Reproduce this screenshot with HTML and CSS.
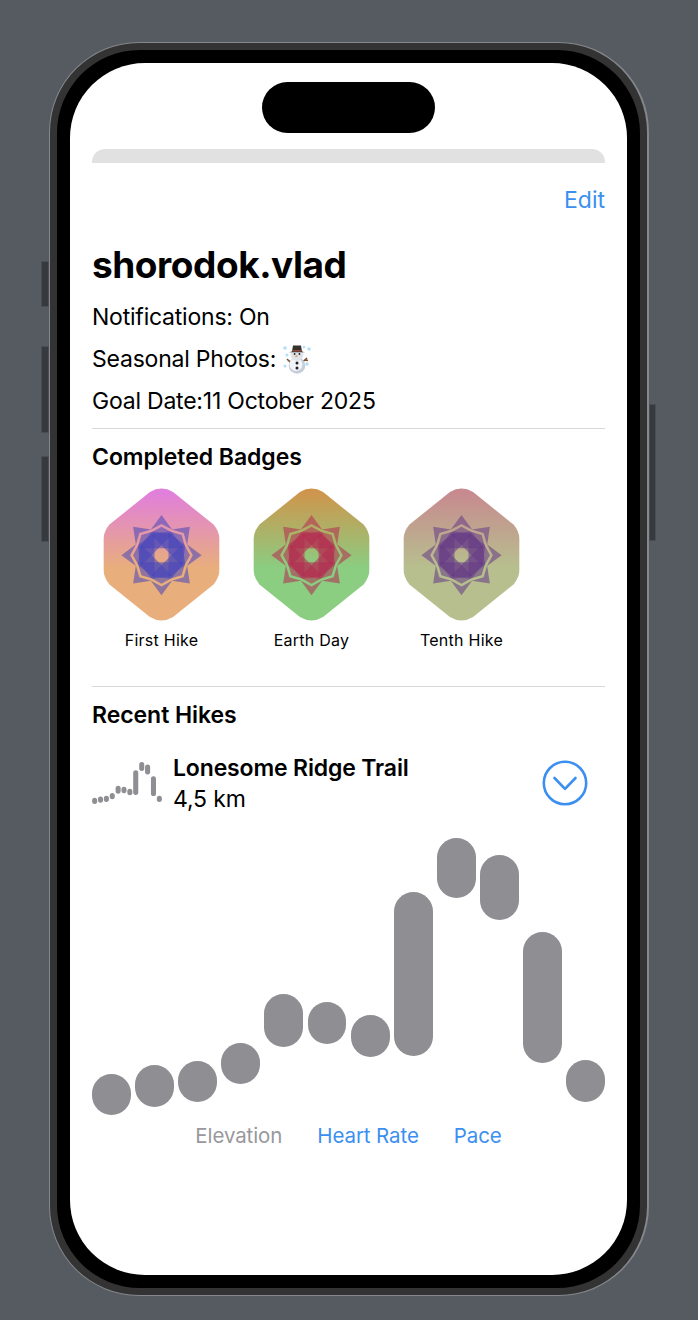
FILE: index.html
```html
<!DOCTYPE html>
<html lang="en">
<head>
    <meta charset="UTF-8">
    <meta name="viewport" content="width=device-width, initial-scale=1.0">
    <title>Profile</title>
    <link rel="stylesheet" href="styles.css">
</head>
<body>
    <div class="phone">
        <span class="side-btn mute"></span>
        <span class="side-btn vol-up"></span>
        <span class="side-btn vol-down"></span>
        <span class="side-btn power"></span>
        <div class="bezel">
            <div class="screen">
                <div class="island"></div>
                <div class="sheet-edge"></div>
                <div class="content">
                    <div class="edit">Edit</div>
                    <h1>shorodok.vlad</h1>
                    <div class="info">Notifications: On</div>
                    <div class="info">Seasonal Photos:
                        <svg class="snowman" viewBox="0 0 30 30">
                            <g fill="#b5def7">
                                <circle cx="3" cy="4" r="1.8"/><circle cx="27" cy="5" r="1.8"/>
                                <circle cx="5" cy="11" r="1.6"/><circle cx="25" cy="20" r="1.8"/>
                                <circle cx="3" cy="22" r="1.6"/><circle cx="22" cy="3" r="1.3"/>
                            </g>
                            <path d="M7 17 L10 18.5 M20 18.5 L25 14 M23 16 L26 16.5 M9 19 L5 15" stroke="#7a5135" stroke-width="1.6" fill="none"/>
                            <circle cx="15" cy="21.5" r="8.3" fill="#c6ced9"/>
                            <circle cx="14" cy="20.5" r="6.5" fill="#f2f5f9"/>
                            <circle cx="15" cy="10.5" r="6.4" fill="#dfe4eb"/>
                            <path d="M10 7.5 L11 1.5 H19 L20 7.5 L23 8.3 H7 Z" fill="#38322f"/>
                            <path d="M10.5 6 H19.5 V7.6 H10.5 Z" fill="#8c4a3a"/>
                            <path d="M15 11 L12.5 13 L15.6 12.6 Z" fill="#e8803a"/>
                            <circle cx="12.6" cy="10" r=".9" fill="#222"/><circle cx="17.4" cy="10" r=".9" fill="#222"/>
                            <circle cx="15" cy="19" r="1.5" fill="#222"/><circle cx="15" cy="24" r="1.5" fill="#222"/>
                        </svg>
                    </div>
                    <div class="info">Goal Date:11 October 2025</div>

                    <hr class="divider first">
                    <h2 class="section-title">Completed Badges</h2>
                    <div class="badges">
                        <div class="badge">
                            <svg class="badge-art sym-blue" viewBox="0 0 100 100">
                                <defs>
                                    <path id="hex" d="M87.44 28.5 L58.32 5 Q50 0 41.68 5 L12.56 28.5 Q8.4 33.5 8.4 38.5 L8.4 61.5 Q8.4 66.5 12.56 71.5 L41.68 95 Q50 100 58.32 95 L87.44 71.5 Q91.6 66.5 91.6 61.5 L91.6 38.5 Q91.6 33.5 87.44 28.5 Z"/>
                                    <path id="petal" opacity=".55" d="M0 -83.6 L-22.6 -53 L0 -65.3 L22.6 -53 Z M0 -59.3 L-22.6 -47 L-47 -14.6 L47 -14.6 L22.6 -47 Z"/>
                                    <g id="burst" transform="translate(50 50.5) scale(.345)">
                                        <use href="#petal"/>
                                        <use href="#petal" transform="rotate(45)"/>
                                        <use href="#petal" transform="rotate(90)"/>
                                        <use href="#petal" transform="rotate(135)"/>
                                        <use href="#petal" transform="rotate(180)"/>
                                        <use href="#petal" transform="rotate(225)"/>
                                        <use href="#petal" transform="rotate(270)"/>
                                        <use href="#petal" transform="rotate(315)"/>
                                    </g>
                                    <linearGradient id="grad-first" x1="0" y1="0" x2="0" y2="1">
                                        <stop offset=".03" stop-color="#e17fdc"/>
                                        <stop offset=".6" stop-color="#e8ae7c"/>
                                    </linearGradient>
                                    <linearGradient id="grad-earth" x1="0" y1="0" x2="0" y2="1">
                                        <stop offset=".03" stop-color="#cf954d"/>
                                        <stop offset=".6" stop-color="#8bcd81"/>
                                    </linearGradient>
                                    <linearGradient id="grad-tenth" x1="0" y1="0" x2="0" y2="1">
                                        <stop offset=".03" stop-color="#c78a8f"/>
                                        <stop offset=".6" stop-color="#b7bf8e"/>
                                    </linearGradient>
                                </defs>
                                <use href="#hex" fill="url(#grad-first)"/>
                                <use href="#burst"/>
                            </svg>
                            <div class="badge-label">First Hike</div>
                        </div>
                        <div class="badge">
                            <svg class="badge-art sym-red" viewBox="0 0 100 100">
                                <use href="#hex" fill="url(#grad-earth)"/>
                                <use href="#burst"/>
                            </svg>
                            <div class="badge-label">Earth Day</div>
                        </div>
                        <div class="badge">
                            <svg class="badge-art sym-purple" viewBox="0 0 100 100">
                                <use href="#hex" fill="url(#grad-tenth)"/>
                                <use href="#burst"/>
                            </svg>
                            <div class="badge-label">Tenth Hike</div>
                        </div>
                    </div>

                    <hr class="divider second">
                    <h2 class="section-title recent">Recent Hikes</h2>
                    <div class="hike-row">
                        <svg class="mini-chart" viewBox="0 0 513 277" preserveAspectRatio="none">
                            <rect x="1" y="236" width="37" height="41" rx="18"/>
                            <rect x="44" y="227" width="37" height="42" rx="18"/>
                            <rect x="87" y="223" width="37" height="41" rx="18"/>
                            <rect x="130" y="205" width="37" height="41" rx="18"/>
                            <rect x="173" y="156" width="37" height="53" rx="18"/>
                            <rect x="216" y="164" width="37" height="42" rx="18"/>
                            <rect x="259" y="177" width="37" height="42" rx="18"/>
                            <rect x="302" y="54" width="37" height="164" rx="18"/>
                            <rect x="346" y="0" width="37" height="60" rx="18"/>
                            <rect x="389" y="17" width="37" height="65" rx="18"/>
                            <rect x="432" y="94" width="37" height="131" rx="18"/>
                            <rect x="475" y="222" width="37" height="42" rx="18"/>
                        </svg>
                        <div class="hike-text">
                            <div class="hike-name">Lonesome Ridge Trail</div>
                            <div class="hike-dist">4,5 km</div>
                        </div>
                        <svg class="expand" viewBox="0 0 46 46">
                            <circle cx="23" cy="23" r="21.2" fill="none" stroke="#3b8ff0" stroke-width="2.6"/>
                            <path d="M12.5 18 L23 28.8 L33.5 18" fill="none" stroke="#3b8ff0" stroke-width="2.6" stroke-linecap="round" stroke-linejoin="round"/>
                        </svg>
                    </div>

                    <div class="chart">
                        <div class="capsule" style="margin-top:236px;height:41px"></div>
                        <div class="capsule" style="margin-top:227px;height:42px"></div>
                        <div class="capsule" style="margin-top:223px;height:41px"></div>
                        <div class="capsule" style="margin-top:205px;height:41px"></div>
                        <div class="capsule" style="margin-top:156px;height:53px"></div>
                        <div class="capsule" style="margin-top:164px;height:42px"></div>
                        <div class="capsule" style="margin-top:177px;height:42px"></div>
                        <div class="capsule" style="margin-top:54px;height:164px"></div>
                        <div class="capsule" style="margin-top:0;height:60px"></div>
                        <div class="capsule" style="margin-top:17px;height:65px"></div>
                        <div class="capsule" style="margin-top:94px;height:131px"></div>
                        <div class="capsule" style="margin-top:222px;height:42px"></div>
                    </div>

                    <div class="tabs">
                        <span class="tab active">Elevation</span>
                        <span class="tab">Heart Rate</span>
                        <span class="tab">Pace</span>
                    </div>
                </div>
            </div>
        </div>
    </div>
</body>
</html>
```

FILE: styles.css
```css
* {
    box-sizing: border-box;
}
body {
    margin: 0;
    height: 1320px;
    overflow: hidden;
    background: #565b62;
    font-family: Inter, "Liberation Sans", sans-serif;
    color: #000;
}
.phone {
    position: relative;
    width: 600px;
    height: 1254px;
    margin: 42px 0 0 49px;
    padding: 7px;
    background: #333;
    border: 1px solid #84878b;
    border-right-width: 2px;
    border-radius: 90px;
}
.side-btn {
    position: absolute;
    width: 8px;
    background: #36393d;
    border: 1px solid #4a4d52;
}
.mute { left: -9px; top: 218px; height: 46px; }
.vol-up { left: -9px; top: 303px; height: 87px; }
.vol-down { left: -9px; top: 413px; height: 86px; }
.power { right: -9px; top: 361px; height: 137px; width: 7px; }
.bezel {
    height: 100%;
    padding: 13px;
    background: #000;
    border-radius: 83px;
}
.screen {
    position: relative;
    height: 100%;
    padding-top: 86px;
    overflow: hidden;
    background: #fff;
    border-radius: 75px;
}
.island {
    position: absolute;
    left: 192px;
    top: 19px;
    width: 173px;
    height: 51px;
    background: #000;
    border-radius: 26px;
}
.sheet-edge {
    height: 14px;
    margin: 0 22px;
    background: #e1e1e1;
    border-radius: 13px 13px 0 0;
}
.content {
    padding: 0 22px;
}
.edit {
    margin-top: 23px;
    font-size: 23px;
    line-height: 28px;
    text-align: right;
    color: #3b8ff0;
}
h1 {
    margin: 28px 0 8px;
    font-size: 37px;
    line-height: 46px;
    font-weight: 700;
    letter-spacing: -0.45px;
}
.info {
    display: flex;
    align-items: center;
    gap: 6px;
    height: 42px;
    font-size: 23px;
    line-height: 42px;
    letter-spacing: -0.22px;
}
.snowman {
    width: 30px;
    height: 30px;
}
.divider {
    height: 1px;
    margin: 0;
    border: 0;
    background: #d8d8da;
}
.divider.first {
    margin-top: 6px;
}
.divider.second {
    margin-top: 36px;
}
.section-title {
    margin: 14px 0 0;
    font-size: 23px;
    line-height: 28px;
    font-weight: 600;
    letter-spacing: -0.05px;
}
.badges {
    display: flex;
    gap: 11px;
    margin-top: 14px;
}
.badge {
    width: 139px;
}
.badge-art {
    display: block;
    width: 139px;
    height: 139px;
}
.sym-blue { fill: #4646bc; }
.sym-red { fill: #b52a50; }
.sym-purple { fill: #653886; }
.badge-label {
    margin-top: 6px;
    font-size: 16px;
    line-height: 20px;
    text-align: center;
    letter-spacing: 0.25px;
}
.hike-row {
    display: flex;
    align-items: center;
    margin-top: 24px;
}
.mini-chart {
    width: 70px;
    height: 42px;
    margin: 0 11px 2px 0;
    fill: #8e8e93;
}
.hike-text {
    font-size: 23px;
    line-height: 31px;
    letter-spacing: -0.15px;
}
.hike-name {
    font-weight: 600;
}
.expand {
    width: 46px;
    height: 46px;
    margin: 0 17px 2px auto;
}
.chart {
    display: flex;
    align-items: flex-start;
    gap: 4.27px;
    height: 277px;
    margin-top: 23px;
}
.capsule {
    flex: 1;
    background: #8e8e93;
    border-radius: 20px;
}
.tabs {
    display: flex;
    justify-content: center;
    gap: 35px;
    margin-top: 8px;
    font-size: 20.5px;
    line-height: 26px;
    letter-spacing: -0.1px;
    color: #3b8ff0;
}
.tab.active {
    color: #98989d;
}
```
